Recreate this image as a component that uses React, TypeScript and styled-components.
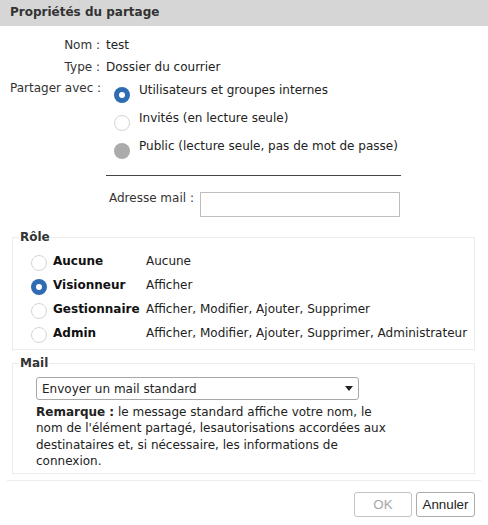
import React from "react";
import styled, { createGlobalStyle } from "styled-components";

const Global = createGlobalStyle`
  html, body { margin: 0; padding: 0; background: #fff; }
  body {
    font-family: "DejaVu Sans", "Liberation Sans", sans-serif;
    font-size: 12px;
    color: #222;
  }
`;

const Dialog = styled.div`
  width: 488px;
  background: #fff;
`;

const TitleBar = styled.div`
  height: 26px;
  line-height: 25px;
  padding-left: 10px;
  background: #d6d6d6;
  color: #333;
  font-weight: bold;
  font-size: 12px;
`;

const Body = styled.div`
  padding: 8px 13px 0 0;
`;

const InfoGrid = styled.div`
  display: grid;
  grid-template-columns: 90px 1fr;
  column-gap: 6px;
  padding-left: 10px;
`;

const Label = styled.div<{ $lh?: number }>`
  text-align: right;
  line-height: ${(p) => p.$lh ?? 22}px;
  color: #333;
  white-space: nowrap;
`;

const Value = styled.div`
  line-height: 22px;
`;

const OptionList = styled.div`
  display: flex;
  flex-direction: column;
  padding-left: 8px;
`;

const Option = styled.label`
  display: flex;
  align-items: flex-start;
  gap: 9px;
  height: 28px;
`;

const OptionText = styled.span`
  padding-top: 4px;
  line-height: 16px;
  color: #222;
`;

type RadioKind = "on" | "off" | "disabled";

const Radio = styled.span<{ $kind: RadioKind; $offset?: number }>`
  flex: none;
  box-sizing: border-box;
  width: 16px;
  height: 16px;
  border-radius: 50%;
  margin-top: ${(p) => p.$offset ?? 0}px;
  display: flex;
  align-items: center;
  justify-content: center;
  background: ${(p) =>
    p.$kind === "on" ? "#2f6cb3" : p.$kind === "disabled" ? "#ababab" : "#fff"};
  border: ${(p) => (p.$kind === "off" ? "1px solid #d4d4d4" : "none")};
  &::after {
    content: "";
    display: ${(p) => (p.$kind === "on" ? "block" : "none")};
    width: 6px;
    height: 6px;
    border-radius: 50%;
    background: #fff;
  }
`;

const Divider = styled.div`
  grid-column: 2;
  width: 295px;
  height: 1px;
  background: #444;
  margin-top: 13px;
`;

const MailRow = styled.div`
  grid-column: 2;
  display: flex;
  align-items: flex-start;
  gap: 6px;
  margin-top: 14px;
  padding-left: 3px;
`;

const MailLabel = styled.span`
  line-height: 16px;
  color: #333;
`;

const TextInput = styled.div`
  box-sizing: border-box;
  width: 200px;
  height: 25px;
  margin-top: 2px;
  border: 1px solid #bdbdbd;
  background: #fff;
`;

const Fieldset = styled.fieldset<{ $mt: number }>`
  margin: ${(p) => p.$mt}px 0 0 12px;
  padding: 0;
  border: 1px solid #ececec;
  min-width: 0;
`;

const Legend = styled.legend`
  margin-left: 6px;
  padding: 0 1px;
  font-weight: bold;
  line-height: 14px;
  color: #333;
`;

const RoleList = styled.div`
  display: grid;
  grid-template-columns: 16px 87px auto;
  grid-auto-rows: 24px;
  column-gap: 6px;
  align-items: center;
  padding: 5px 0 4px 18px;
`;

const RoleName = styled.span`
  font-weight: bold;
  color: #111;
  white-space: nowrap;
`;

const RoleDesc = styled.span`
  white-space: nowrap;
`;

const MailBody = styled.div`
  padding: 7px 0 4px 23px;
`;

const SelectBox = styled.div`
  box-sizing: border-box;
  width: 323px;
  height: 23px;
  display: flex;
  align-items: center;
  justify-content: space-between;
  padding: 0 5px 0 5px;
  border: 1px solid #a8a8a8;
  border-radius: 3px;
  background: #fff;
`;

const Remark = styled.div`
  margin: 4px 0 0 0;
  width: 355px;
  line-height: 16.3px;
`;

const Strong = styled.span`
  font-weight: bold;
`;

const Separator = styled.div`
  margin: 6px 7px 0 7px;
  height: 1px;
  background: #ececec;
`;

const Footer = styled.div`
  display: flex;
  justify-content: flex-end;
  gap: 4px;
  padding: 11px 13px 0 0;
`;

const Button = styled.button<{ $w: number }>`
  box-sizing: border-box;
  width: ${(p) => p.$w}px;
  height: 25px;
  padding: 0;
  background: #fff;
  border: 1px solid #ababab;
  border-radius: 3px;
  font-family: "Liberation Sans", Arial, sans-serif;
  font-size: 13.33px;
  color: #222;
  &:disabled {
    color: #a6a6a6;
    border-color: #c4c4c4;
  }
`;

const roles: { name: string; desc: string; checked?: boolean }[] = [
  { name: "Aucune", desc: "Aucune" },
  { name: "Visionneur", desc: "Afficher", checked: true },
  { name: "Gestionnaire", desc: "Afficher, Modifier, Ajouter, Supprimer" },
  {
    name: "Admin",
    desc: "Afficher, Modifier, Ajouter, Supprimer, Administrateur",
  },
];

export default function App() {
  return (
    <>
      <Global />
      <Dialog>
        <TitleBar>Propriétés du partage</TitleBar>
        <Body>
          <InfoGrid>
            <Label>Nom :</Label>
            <Value>test</Value>
            <Label>Type :</Label>
            <Value>Dossier du courrier</Value>
            <Label $lh={20}>Partager avec :</Label>
            <OptionList>
              <Option>
                <Radio $kind="on" $offset={9} />
                <OptionText>Utilisateurs et groupes internes</OptionText>
              </Option>
              <Option>
                <Radio $kind="off" $offset={9} />
                <OptionText>Invités (en lecture seule)</OptionText>
              </Option>
              <Option>
                <Radio $kind="disabled" $offset={9} />
                <OptionText>Public (lecture seule, pas de mot de passe)</OptionText>
              </Option>
            </OptionList>
            <Divider />
            <MailRow>
              <MailLabel>Adresse mail :</MailLabel>
              <TextInput />
            </MailRow>
          </InfoGrid>

          <Fieldset $mt={13}>
            <Legend>Rôle</Legend>
            <RoleList>
              {roles.map((r) => (
                <React.Fragment key={r.name}>
                  <Radio $kind={r.checked ? "on" : "off"} $offset={4} />
                  <RoleName>{r.name}</RoleName>
                  <RoleDesc>{r.desc}</RoleDesc>
                </React.Fragment>
              ))}
            </RoleList>
          </Fieldset>

          <Fieldset $mt={6}>
            <Legend>Mail</Legend>
            <MailBody>
              <SelectBox>
                <span>Envoyer un mail standard</span>
                <svg width="8" height="5" viewBox="0 0 8 5">
                  <path d="M0 0 L8 0 L4 5 Z" fill="#222" />
                </svg>
              </SelectBox>
              <Remark>
                <Strong>Remarque :</Strong> le message standard affiche votre
                nom, le nom de l'élément partagé, lesautorisations accordées
                aux destinataires et, si nécessaire, les informations de
                connexion.
              </Remark>
            </MailBody>
          </Fieldset>
        </Body>
        <Separator />
        <Footer>
          <Button $w={58} disabled>
            OK
          </Button>
          <Button $w={59}>Annuler</Button>
        </Footer>
      </Dialog>
    </>
  );
}
